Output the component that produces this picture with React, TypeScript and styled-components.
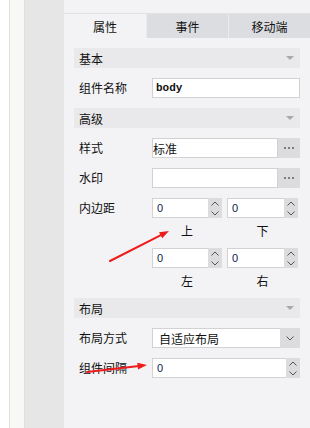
import React from 'react';
import styled, { createGlobalStyle } from 'styled-components';

const GlobalStyle = createGlobalStyle`
  html, body {
    margin: 0;
    padding: 0;
    background: #ffffff;
  }
  body {
    font-family: "Noto Sans CJK SC", "Liberation Sans", sans-serif;
    font-size: 12px;
    color: #111;
  }
`;

const Page = styled.div`
  position: relative;
  display: flex;
  width: 310px;
  height: 428px;
  overflow: hidden;
`;

const WhiteGutter = styled.div`
  width: 9px;
  background: #ffffff;
  border-right: 1px solid #e2e1d8;
`;

const Strip = styled.div`
  width: 15px;
  background: #f8f8f6;
  border-right: 1px solid #e2e1d8;
`;

const GrayColumn = styled.div`
  width: 41px;
  background: #e6e6e6;
`;

const Panel = styled.div`
  flex: 1;
  display: flex;
  flex-direction: column;
  background: #f3f3f5;
`;

const TopBar = styled.div`
  height: 13px;
  border-bottom: 1px solid #e1e1e3;
`;

const Tabs = styled.div`
  display: flex;
  height: 24px;
`;

const Tab = styled.div<{ $active?: boolean; $width: number }>`
  width: ${(p) => p.$width}px;
  display: flex;
  align-items: center;
  justify-content: center;
  background: ${(p) => (p.$active ? '#f3f3f5' : '#dcdde0')};
  color: #111;
  font-size: 12px;
  & + & {
    border-left: 1px solid #ebebed;
  }
`;

const Body = styled.div`
  display: flex;
  flex-direction: column;
  padding: 10px 10px 0;
  gap: 10px;
`;

const SectionHeader = styled.div`
  height: 20px;
  display: flex;
  align-items: center;
  justify-content: space-between;
  padding: 0 6px 0 5px;
  background: #e9e9eb;
`;

const Caret = styled.span`
  width: 0;
  height: 0;
  border-left: 4px solid transparent;
  border-right: 4px solid transparent;
  border-top: 4px solid #a9a9a9;
`;

const Row = styled.div`
  display: flex;
  align-items: flex-start;
  min-height: 20px;
`;

const Label = styled.div`
  width: 73px;
  padding-left: 5px;
  line-height: 20px;
  height: 20px;
  flex-shrink: 0;
`;

const Field = styled.div`
  flex: 1;
  display: flex;
  height: 20px;
`;

const TextBox = styled.div<{ $mono?: boolean }>`
  flex: 1;
  display: flex;
  align-items: center;
  box-sizing: border-box;
  border: 1px solid #d2d2d4;
  background: #ffffff;
  padding-left: ${(p) => (p.$mono ? 3 : 0)}px;
  font-family: ${(p) =>
    p.$mono ? '"Liberation Mono", monospace' : '"Noto Sans CJK SC", sans-serif'};
  font-size: ${(p) => (p.$mono ? 11 : 12)}px;
  font-weight: ${(p) => (p.$mono ? 'bold' : 'normal')};
  color: #111;
`;

const MoreButton = styled.div`
  width: 22px;
  display: flex;
  align-items: center;
  justify-content: center;
  gap: 2px;
  background: #dcdcde;
  span {
    width: 2px;
    height: 2px;
    background: #7d7d80;
  }
`;

const NumberBox = styled.div`
  flex: 1;
  display: flex;
  height: 20px;
`;

const NumberInput = styled.div`
  flex: 1;
  box-sizing: border-box;
  border: 1px solid #d2d2d4;
  border-right: none;
  background: #ffffff;
  display: flex;
  align-items: center;
  padding-left: 4px;
  font-family: "Liberation Sans", sans-serif;
  font-size: 11px;
  color: #0c1a4a;
`;

const Spinner = styled.div`
  width: 14px;
  display: flex;
  flex-direction: column;
  align-items: center;
  justify-content: space-around;
  background: #dcdcde;
`;

const SelectBox = styled.div`
  flex: 1;
  display: flex;
  height: 20px;
  box-sizing: border-box;
  border: 1px solid #d2d2d4;
  border-right: none;
  background: #ffffff;
`;

const SelectText = styled.div`
  flex: 1;
  display: flex;
  align-items: center;
  padding-left: 6px;
  font-size: 12px;
`;

const SelectToggle = styled.div`
  width: 20px;
  margin: -1px 0;
  display: flex;
  align-items: center;
  justify-content: center;
  background: #dcdcde;
`;

const PaddingGrid = styled.div`
  flex: 1;
  display: grid;
  grid-template-columns: 70px 71px;
  column-gap: 5px;
`;

const SideLabel = styled.div`
  height: 24px;
  margin-bottom: 6px;
  display: flex;
  align-items: center;
  justify-content: center;
  font-size: 12px;

  &:nth-last-child(-n + 2) {
    margin-bottom: -4px;
  }
`;

const Overlay = styled.svg`
  position: absolute;
  left: 0;
  top: 0;
  pointer-events: none;
`;

const Chevron = ({ up }: { up?: boolean }) => (
  <svg width="8" height="5" viewBox="0 0 8 5">
    <path
      d={up ? 'M0.5 4.5 L4 1 L7.5 4.5' : 'M0.5 0.5 L4 4 L7.5 0.5'}
      fill="none"
      stroke="#555"
      strokeWidth="1"
    />
  </svg>
);

const NumberField = ({ value }: { value: string }) => (
  <NumberBox>
    <NumberInput>{value}</NumberInput>
    <Spinner>
      <Chevron up />
      <Chevron />
    </Spinner>
  </NumberBox>
);

const Section = ({ title }: { title: string }) => (
  <SectionHeader>
    <span>{title}</span>
    <Caret />
  </SectionHeader>
);

const Arrow = ({ x1, y1, x2, y2 }: { x1: number; y1: number; x2: number; y2: number }) => {
  const angle = Math.atan2(y2 - y1, x2 - x1);
  const len = 10;
  const spread = 0.35;
  const ax = x2 - len * Math.cos(angle - spread);
  const ay = y2 - len * Math.sin(angle - spread);
  const bx = x2 - len * Math.cos(angle + spread);
  const by = y2 - len * Math.sin(angle + spread);
  const mx = x2 - (len - 2) * Math.cos(angle);
  const my = y2 - (len - 2) * Math.sin(angle);
  return (
    <g>
      <line x1={x1} y1={y1} x2={mx} y2={my} stroke="#ee1c1c" strokeWidth="2" strokeLinecap="round" />
      <polygon points={`${x2},${y2} ${ax},${ay} ${bx},${by}`} fill="#ee1c1c" />
    </g>
  );
};

const App = () => (
  <>
    <GlobalStyle />
    <Page>
      <WhiteGutter />
      <Strip />
      <GrayColumn />
      <Panel>
        <TopBar />
        <Tabs>
          <Tab $active $width={82}>属性</Tab>
          <Tab $width={81}>事件</Tab>
          <Tab $width={81}>移动端</Tab>
        </Tabs>
        <Body>
          <Section title="基本" />
          <Row>
            <Label>组件名称</Label>
            <Field>
              <TextBox $mono>body</TextBox>
            </Field>
          </Row>
          <Section title="高级" />
          <Row>
            <Label>样式</Label>
            <Field>
              <TextBox>标准</TextBox>
              <MoreButton>
                <span />
                <span />
                <span />
              </MoreButton>
            </Field>
          </Row>
          <Row>
            <Label>水印</Label>
            <Field>
              <TextBox />
              <MoreButton>
                <span />
                <span />
                <span />
              </MoreButton>
            </Field>
          </Row>
          <Row>
            <Label>内边距</Label>
            <PaddingGrid>
              <NumberField value="0" />
              <NumberField value="0" />
              <SideLabel>上</SideLabel>
              <SideLabel>下</SideLabel>
              <NumberField value="0" />
              <NumberField value="0" />
              <SideLabel>左</SideLabel>
              <SideLabel>右</SideLabel>
            </PaddingGrid>
          </Row>
          <Section title="布局" />
          <Row>
            <Label>布局方式</Label>
            <SelectBox>
              <SelectText>自适应布局</SelectText>
              <SelectToggle>
                <Chevron />
              </SelectToggle>
            </SelectBox>
          </Row>
          <Row>
            <Label>组件间隔</Label>
            <NumberField value="0" />
          </Row>
        </Body>
      </Panel>
      <Overlay width="310" height="428">
        <Arrow x1={110} y1={261} x2={169} y2={231} />
        <Arrow x1={87} y1={372} x2={147} y2={365} />
      </Overlay>
    </Page>
  </>
);

export default App;
